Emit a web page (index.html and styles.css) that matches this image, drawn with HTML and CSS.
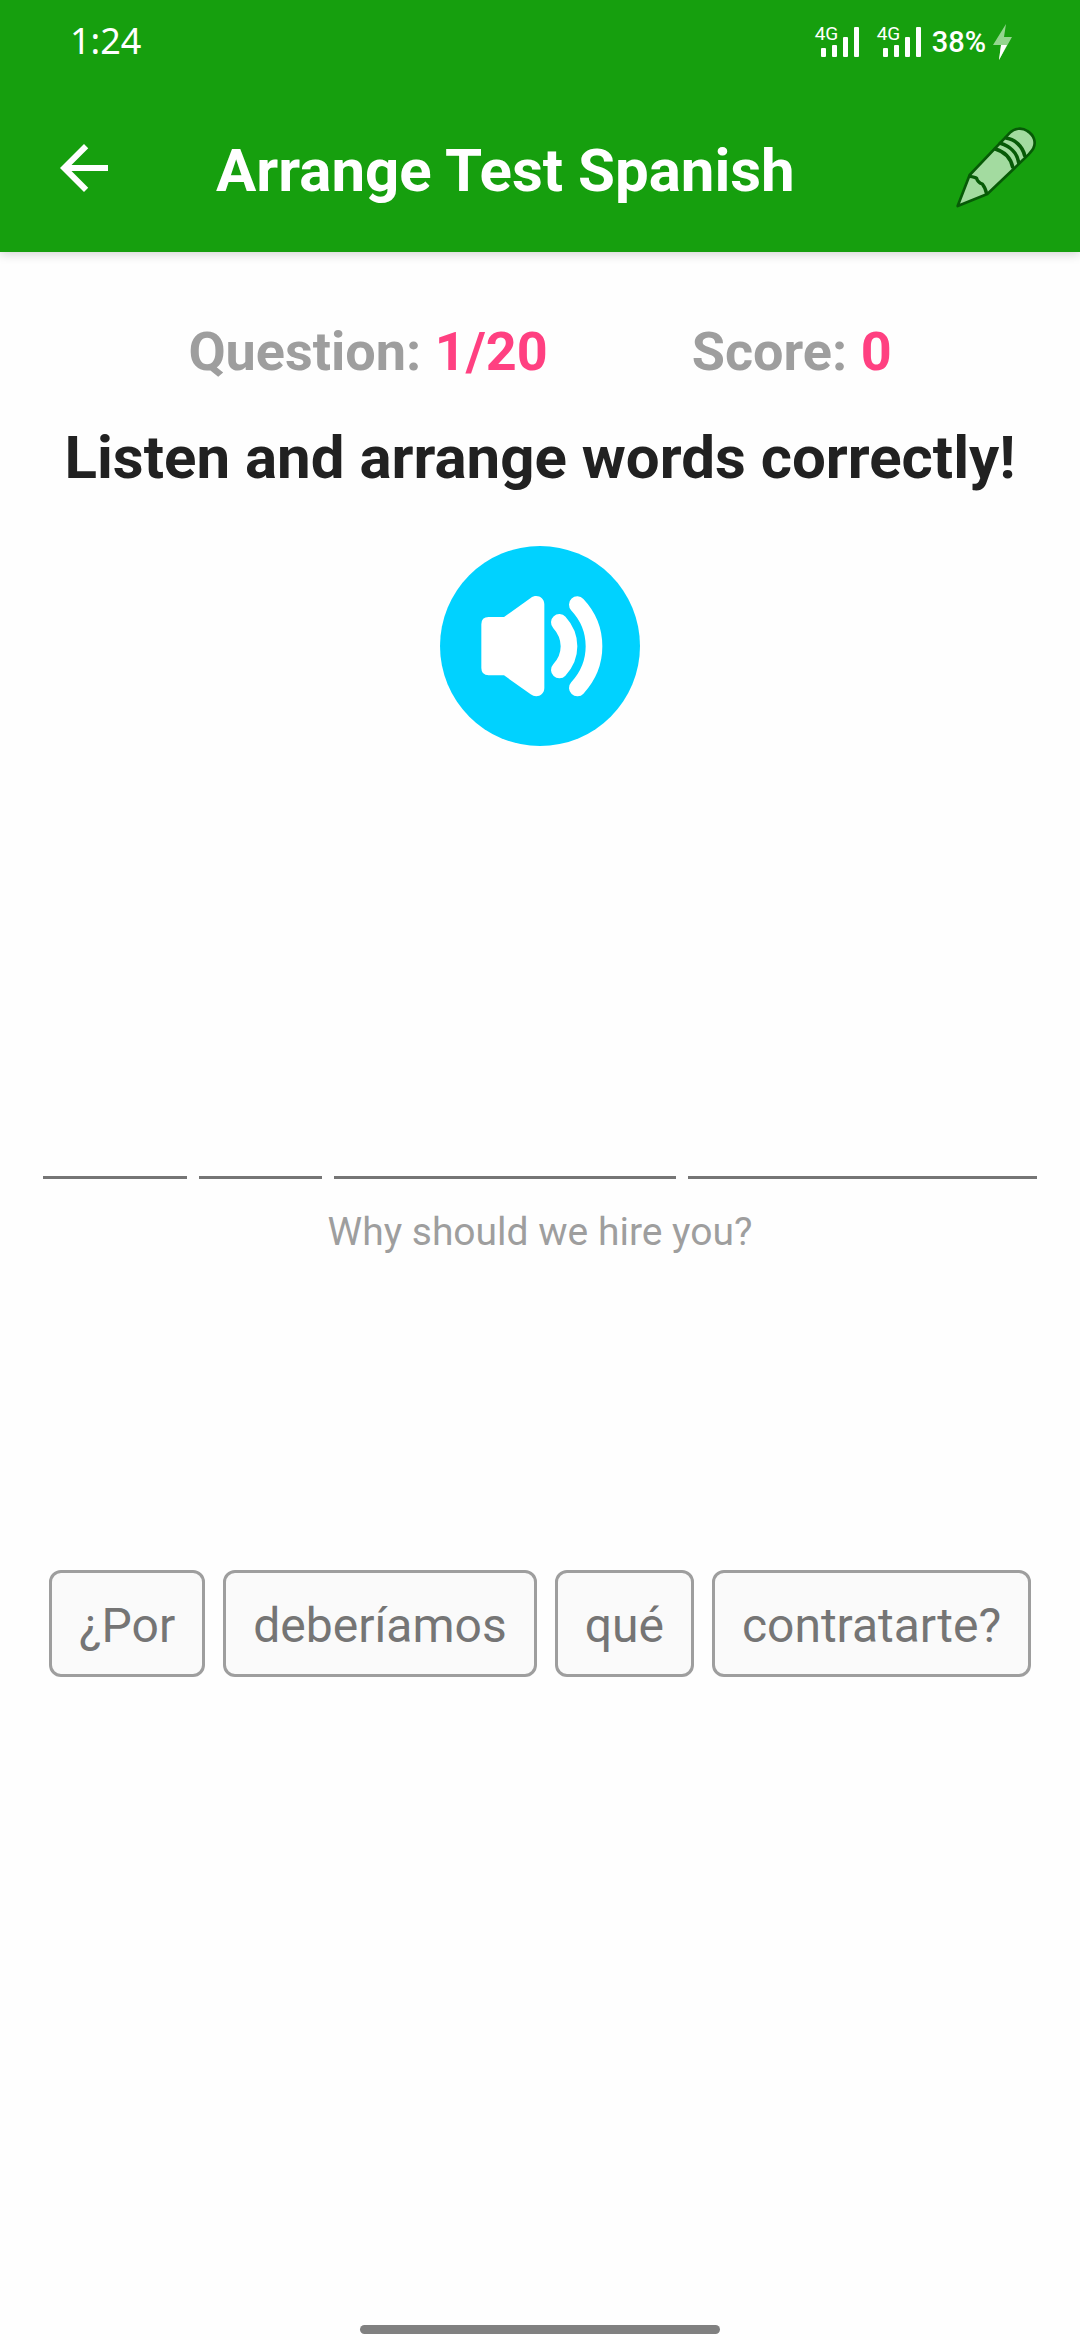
FILE: index.html
```html
<!DOCTYPE html>
<html lang="en">
<head>
  <meta charset="UTF-8">
  <meta name="viewport" content="width=device-width, initial-scale=1.0">
  <title>Arrange Test Spanish</title>
  <link rel="stylesheet" href="styles.css">
</head>
<body>
  <header>
    <!-- Status bar -->
    <div class="status">
      <span class="time">1:24</span>
      <div class="status-right">
        <div class="signal">
          <span class="network">4G</span>
          <svg viewBox="0 0 40 30" width="40" height="30" fill="#fff">
            <rect x="1" y="21" width="5" height="9" rx="1"/>
            <rect x="12" y="18" width="5" height="12" rx="1"/>
            <rect x="23" y="10" width="5" height="20" rx="1"/>
            <rect x="34" y="0" width="5" height="30" rx="1"/>
          </svg>
        </div>
        <div class="signal">
          <span class="network">4G</span>
          <svg viewBox="0 0 40 30" width="40" height="30" fill="#fff">
            <rect x="1" y="21" width="5" height="9" rx="1"/>
            <rect x="12" y="18" width="5" height="12" rx="1"/>
            <rect x="23" y="10" width="5" height="20" rx="1"/>
            <rect x="34" y="0" width="5" height="30" rx="1"/>
          </svg>
        </div>
        <span class="battery">38%</span>
        <svg class="bolt" viewBox="0 0 19 36" width="19" height="36">
          <path d="M13 0L0 21H8L6 36L19 13H11Z" fill="#94d68f"/>
          <path d="M8 21H14L6 36Z" fill="#fff"/>
        </svg>
      </div>
    </div>

    <!-- Toolbar -->
    <div class="toolbar">
      <button class="icon-button" type="button" aria-label="Back">
        <svg viewBox="0 0 24 24" width="72" height="72" fill="#fff">
          <path d="M20 11H7.83l5.59-5.59L12 4l-8 8 8 8 1.41-1.41L7.83 13H20v-2z"/>
        </svg>
      </button>
      <h1>Arrange Test Spanish</h1>
      <button class="icon-button" type="button" aria-label="Write">
        <svg viewBox="156 72 264 264" width="88" height="88" fill="#a3dba0" stroke="#075a07" stroke-width="8" stroke-linejoin="round" stroke-linecap="round">
          <path d="M173 318L209 225L330 98C343 84 367 82 382 93C402 105 409 127 400 145C397 151 391 157 386 163L344 204L262 282Z"/>
          <path d="M209 229C217 230 225 231 230 235C232 244 239 249 247 252C252 259 258 268 259 279" fill="none" stroke-width="10"/>
          <path d="M286 147C313 155 332 174 338 201M301 130C329 138 351 158 356 187M318 114C345 118 368 139 374 167" fill="none" stroke-width="11"/>
        </svg>
      </button>
    </div>
  </header>

  <main>
    <div class="stats">
      <p>Question: <span>1/20</span></p>
      <p>Score: <span>0</span></p>
    </div>

    <h2>Listen and arrange words correctly!</h2>

    <button class="speaker" type="button" aria-label="Play sentence">
      <svg viewBox="60 47 600 600" width="200" height="200">
        <path d="M206 260H252L332 203C349 190 373 200 373 222V473C373 495 349 505 332 492L252 435H206Q184 435 184 413V282Q184 260 206 260Z" fill="#fff"/>
        <path d="M418 276Q447 308 447 348Q447 388 418 419M472 223Q522 276 522 348Q522 419 472 473" fill="none" stroke="#fff" stroke-width="50" stroke-linecap="round"/>
      </svg>
    </button>

    <!-- Empty places for the answer -->
    <div class="answer">
      <div class="blanks">
        <span class="blank blank-1"></span>
        <span class="blank blank-2"></span>
        <span class="blank blank-3"></span>
        <span class="blank blank-4"></span>
      </div>
    </div>
    <p class="translation">Why should we hire you?</p>

    <!-- Words to pick -->
    <div class="words">
      <button class="word" type="button">¿Por</button>
      <button class="word" type="button">deberíamos</button>
      <button class="word" type="button">qué</button>
      <button class="word" type="button">contratarte?</button>
    </div>
  </main>

  <footer>
    <div class="home-bar"></div>
  </footer>
</body>
</html>
```

FILE: styles.css
```css
* {
  box-sizing: border-box;
}

body {
  margin: 0;
  min-height: 100vh;
  display: flex;
  flex-direction: column;
  background-color: #fefefe;
  font-family: Roboto, "Liberation Sans", sans-serif;
}

h1, h2, p {
  margin: 0;
}

svg {
  display: block;
}

button {
  font-family: inherit;
  cursor: pointer;
}

/* green top part */
header {
  background-color: #169f0e;
  color: white;
  box-shadow: 0 2px 10px rgba(0, 0, 0, 0.18);
}

.status {
  height: 84px;
  padding: 0 68px 0 70px;
  display: flex;
  justify-content: space-between;
  align-items: center;
}

.time {
  padding-bottom: 4px;
  font-family: "Noto Sans", sans-serif;
  font-size: 36px;
}

.status-right {
  display: flex;
  align-items: center;
}

.signal {
  position: relative;
  margin-right: 22px;
}

.signal + .signal {
  margin-right: 10px;
}

.network {
  position: absolute;
  top: -5px;
  left: -5px;
  font-size: 19px;
  line-height: 24px;
}

.battery {
  font-size: 29px;
  font-weight: 500;
  line-height: 36px;
}

.bolt {
  margin-left: 7px;
}

.toolbar {
  height: 168px;
  padding: 0 40px 0 48px;
  display: flex;
  align-items: center;
}

.icon-button {
  padding: 0;
  border: none;
  background: none;
}

.toolbar h1 {
  flex: 1;
  margin-left: 96px;
  padding-top: 6px;
  font-size: 60px;
  line-height: 72px;
}

/* question part */
main {
  flex: 1;
  padding: 68px 40px 0;
  display: flex;
  flex-direction: column;
  align-items: center;
}

.stats {
  display: flex;
  justify-content: center;
  gap: 144px;
  color: #9e9e9e;
  font-size: 54px;
  line-height: 64px;
  font-weight: bold;
}

.stats span {
  color: #ff4081;
}

h2 {
  margin-top: 38px;
  color: #212121;
  font-size: 60px;
  line-height: 72px;
  text-align: center;
}

.speaker {
  margin-top: 52px;
  padding: 0;
  border: none;
  border-radius: 50%;
  background-color: #00d2ff;
}

.answer {
  min-height: 433px;
  display: flex;
  align-items: flex-end;
}

.blanks {
  display: flex;
  gap: 12px;
}

.blank {
  height: 3px;
  background-color: #757575;
}

.blank-1 {
  width: 144px;
}

.blank-2 {
  width: 123px;
}

.blank-3 {
  width: 342px;
}

.blank-4 {
  width: 349px;
}

.translation {
  margin-top: 30px;
  color: #9e9e9e;
  font-size: 39px;
  line-height: 46px;
}

.words {
  margin-top: 315px;
  display: flex;
  flex-wrap: wrap;
  justify-content: center;
  gap: 18px;
}

.word {
  padding: 24px 27px 20px;
  border: 3px solid #9e9e9e;
  border-radius: 12px;
  background-color: #fafafa;
  color: #757575;
  font-size: 48px;
  line-height: 57px;
}

/* bottom gesture bar */
footer {
  padding: 20px 0 6px;
}

.home-bar {
  width: 33.33%;
  height: 9px;
  margin: 0 auto;
  border-radius: 5px;
  background-color: #808080;
}
```
